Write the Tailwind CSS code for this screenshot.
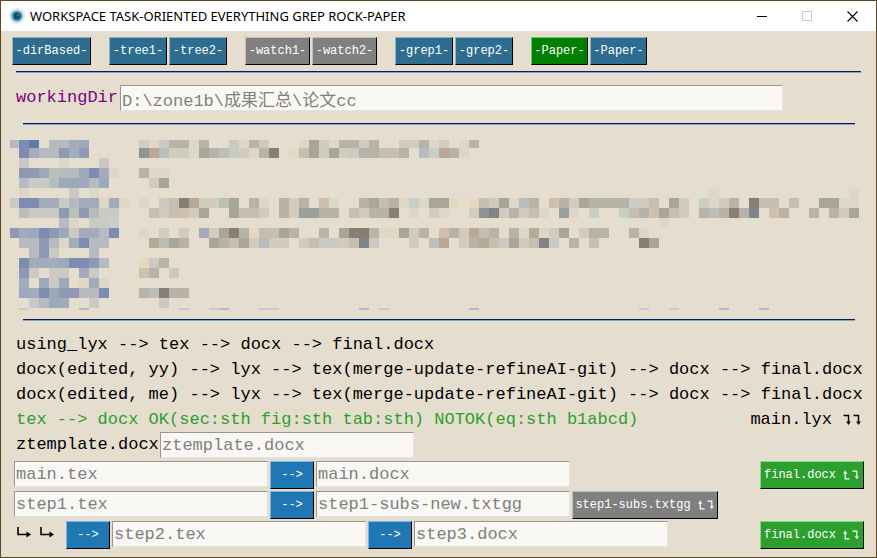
<!DOCTYPE html>
<html lang="en">
<head>
<meta charset="utf-8">
<meta name="viewport" content="width=device-width, initial-scale=1">
<title>WORKSPACE TASK-ORIENTED EVERYTHING GREP ROCK-PAPER</title>
<script src="https://cdn.jsdelivr.net/npm/@tailwindcss/browser@4"></script>
</head>
<body class="min-h-screen flex flex-col border border-[#5b4a24] bg-[#e5decf] overflow-x-hidden font-['Liberation_Mono','Noto_Sans_CJK_SC',monospace] text-black">
<svg class="hidden">
  <symbol id="down" viewBox="0 0 10 14"><path d="M1.5 2.5H6.5V9" fill="none" stroke="currentColor" stroke-width="1.4"/><path d="M4.2 8.5H8.8L6.5 12Z" fill="currentColor"/></symbol>
  <symbol id="up" viewBox="0 0 10 14"><path d="M3.5 4V11.5H8.5" fill="none" stroke="currentColor" stroke-width="1.4"/><path d="M1 5.5H6L3.5 1.8Z" fill="currentColor"/></symbol>
  <symbol id="right" viewBox="0 0 16 14"><path d="M2 1V8.5H11" fill="none" stroke="currentColor" stroke-width="1.6"/><path d="M10.5 5.5V11.5L15 8.5Z" fill="currentColor"/></symbol>
</svg>

<header class="flex h-[30px] items-center bg-white pl-2">
  <svg class="size-4 shrink-0" viewBox="0 0 16 16"><circle cx="8" cy="8" r="8" fill="#e3e5e6"/><circle cx="8" cy="8" r="5.6" fill="#35a8d5"/><circle cx="8" cy="8" r="3.5" fill="#2b4356"/><circle cx="9.2" cy="7" r="1" fill="#5d7584"/></svg>
  <h1 class="ml-[5px] grow whitespace-nowrap font-['Noto_Sans',sans-serif] text-[13px] leading-4">WORKSPACE TASK-ORIENTED EVERYTHING GREP ROCK-PAPER</h1>
  <button aria-label="Minimize" class="flex h-full w-[45px] items-center justify-center"><svg class="size-[10px]" viewBox="0 0 10 10"><path d="M0 5.5H10" stroke="#000"/></svg></button>
  <button aria-label="Maximize" disabled class="flex h-full w-[45px] items-center justify-center"><svg class="size-[10px]" viewBox="0 0 10 10"><rect x=".5" y=".5" width="9" height="9" fill="none" stroke="#ccc"/></svg></button>
  <button aria-label="Close" class="flex h-full w-[47px] items-center justify-center"><svg class="size-[11px]" viewBox="0 0 11 11"><path d="M.5 .5L10.5 10.5M10.5 .5L.5 10.5" stroke="#000" stroke-width="1.1"/></svg></button>
</header>

<main class="flex flex-col">
  <nav class="flex gap-[18px] pt-[6px] pl-[11px] text-[12px] text-white">
    <div class="flex gap-[2px]">
      <button class="h-7 w-[79px] border border-t-[#8fb3c6] border-l-[#8fb3c6] border-r-black border-b-black bg-[#2e6d8f]">-dirBased-</button>
    </div>
    <div class="flex gap-[2px]">
      <button class="h-7 w-[58px] border border-t-[#8fb3c6] border-l-[#8fb3c6] border-r-black border-b-black bg-[#2e6d8f]">-tree1-</button>
      <button class="h-7 w-[58px] border border-t-[#8fb3c6] border-l-[#8fb3c6] border-r-black border-b-black bg-[#2e6d8f]">-tree2-</button>
    </div>
    <div class="flex gap-[2px]">
      <button class="h-7 w-[65px] border border-t-[#c0c0c0] border-l-[#c0c0c0] border-r-black border-b-black bg-[#808080]">-watch1-</button>
      <button class="h-7 w-[65px] border border-t-[#c0c0c0] border-l-[#c0c0c0] border-r-black border-b-black bg-[#808080]">-watch2-</button>
    </div>
    <div class="flex gap-[2px]">
      <button class="h-7 w-[58px] border border-t-[#8fb3c6] border-l-[#8fb3c6] border-r-black border-b-black bg-[#2e6d8f]">-grep1-</button>
      <button class="h-7 w-[58px] border border-t-[#8fb3c6] border-l-[#8fb3c6] border-r-black border-b-black bg-[#2e6d8f]">-grep2-</button>
    </div>
    <div class="flex gap-[2px]">
      <button class="h-7 w-[57px] border border-t-[#6fc06f] border-l-[#6fc06f] border-r-black border-b-black bg-[#008000]">-Paper-</button>
      <button class="h-7 w-[57px] border border-t-[#8fb3c6] border-l-[#8fb3c6] border-r-black border-b-black bg-[#2e6d8f]">-Paper-</button>
    </div>
  </nav>

  <hr class="mt-[6px] mr-[15px] ml-[15px] h-[2px] border-0 border-t border-t-[#00205c] bg-[#86a4cc]">

  <div class="mt-3 flex items-center pl-[15px] text-[17px]">
    <label for="dir" class="w-[104px] text-[#800080]">workingDir</label>
    <input id="dir" value="D:\zone1b\成果汇总\论文cc" class="mr-[93px] h-[26px] min-w-0 grow border border-t-[#999792] border-l-[#999792] border-r-[#e3e3e3] border-b-[#e3e3e3] bg-[#f9f8f4] pl-px text-[#808080] outline-none">
  </div>

  <hr class="mt-3 mr-[21px] ml-[22px] h-[2px] border-0 border-t border-t-[#00205c] bg-[#86a4cc]">

  <div class="mt-[15px] ml-[9px] h-[170px] overflow-hidden">
    <svg id="mosaic" class="block h-[170px] w-[850px]" viewBox="10 140 850 170" shape-rendering="crispEdges" aria-hidden="true"></svg>
  </div>

  <hr class="mt-[9px] mr-[21px] ml-[22px] h-[2px] border-0 border-t border-t-[#00205c] bg-[#86a4cc]">

  <div class="mt-[11px] pl-[15px] text-[17px] leading-[25px] whitespace-nowrap">
    <p>using_lyx --&gt; tex --&gt; docx --&gt; final.docx</p>
    <p>docx(edited, yy) --&gt; lyx --&gt; tex(merge-update-refineAI-git) --&gt; docx --&gt; final.docx</p>
    <p>docx(edited, me) --&gt; lyx --&gt; tex(merge-update-refineAI-git) --&gt; docx --&gt; final.docx</p>
    <div class="flex items-center justify-between pr-[14px]">
      <p class="text-[#2ca02c]">tex --&gt; docx OK(sec:sth fig:sth tab:sth) NOTOK(eq:sth b1abcd)</p>
      <p class="flex items-center">main.lyx<span class="ml-[10px] flex"><svg class="h-[14px] w-[10px]"><use href="#down"/></svg><svg class="h-[14px] w-[10px]"><use href="#down"/></svg></span></p>
    </div>
  </div>

  <div class="flex items-center pl-[15px] text-[17px]">
    <label for="tpl" class="w-[144px]">ztemplate.docx</label>
    <input id="tpl" value="ztemplate.docx" class="h-[26px] w-[254px] border border-t-[#999792] border-l-[#999792] border-r-[#e3e3e3] border-b-[#e3e3e3] bg-[#f9f8f4] pl-px text-[#808080] outline-none">
  </div>

  <div class="mt-[3px] flex flex-col gap-[2px] pr-[12px] pl-[13px] text-[17px]">
    <div class="flex items-start gap-[2px]">
      <input aria-label="Main source" value="main.tex" class="h-[26px] w-[254px] border border-t-[#999792] border-l-[#999792] border-r-[#e3e3e3] border-b-[#e3e3e3] bg-[#f9f8f4] pl-px text-[#808080] outline-none">
      <button class="h-7 w-[44px] border border-t-[#7fb2f0] border-l-[#7fb2f0] border-r-black border-b-black bg-[#1f77b4] text-[12px] text-white">--&gt;</button>
      <input aria-label="Main output" value="main.docx" class="h-[26px] w-[254px] border border-t-[#999792] border-l-[#999792] border-r-[#e3e3e3] border-b-[#e3e3e3] bg-[#f9f8f4] pl-px text-[#808080] outline-none">
      <button class="ml-auto flex h-7 w-[104px] items-center justify-center border border-t-[#85dc85] border-l-[#85dc85] border-r-black border-b-black bg-[#2ca02c] text-[12px] text-white">final.docx<svg class="ml-[6px] h-[12px] w-[9px]"><use href="#up"/></svg><svg class="h-[12px] w-[9px]"><use href="#down"/></svg></button>
    </div>
    <div class="flex items-start gap-[2px]">
      <input aria-label="Step 1 source" value="step1.tex" class="h-[26px] w-[254px] border border-t-[#999792] border-l-[#999792] border-r-[#e3e3e3] border-b-[#e3e3e3] bg-[#f9f8f4] pl-px text-[#808080] outline-none">
      <button class="h-7 w-[44px] border border-t-[#7fb2f0] border-l-[#7fb2f0] border-r-black border-b-black bg-[#1f77b4] text-[12px] text-white">--&gt;</button>
      <input aria-label="Step 1 output" value="step1-subs-new.txtgg" class="h-[26px] w-[254px] border border-t-[#999792] border-l-[#999792] border-r-[#e3e3e3] border-b-[#e3e3e3] bg-[#f9f8f4] pl-px text-[#808080] outline-none">
      <button class="flex h-7 w-[146px] items-center justify-center border border-t-[#c0c0c0] border-l-[#c0c0c0] border-r-black border-b-black bg-[#808080] text-[12px] text-white">step1-subs.txtgg<svg class="ml-[6px] h-[12px] w-[9px]"><use href="#up"/></svg><svg class="h-[12px] w-[9px]"><use href="#down"/></svg></button>
    </div>
    <div class="flex items-start gap-[2px]">
      <span class="flex w-[50px] gap-[7px] pt-[5px] pl-[2px]"><svg class="h-[14px] w-4"><use href="#right"/></svg><svg class="h-[14px] w-4"><use href="#right"/></svg></span>
      <button class="h-7 w-[44px] border border-t-[#7fb2f0] border-l-[#7fb2f0] border-r-black border-b-black bg-[#1f77b4] text-[12px] text-white">--&gt;</button>
      <input aria-label="Step 2 source" value="step2.tex" class="h-[26px] w-[254px] border border-t-[#999792] border-l-[#999792] border-r-[#e3e3e3] border-b-[#e3e3e3] bg-[#f9f8f4] pl-px text-[#808080] outline-none">
      <button class="h-7 w-[44px] border border-t-[#7fb2f0] border-l-[#7fb2f0] border-r-black border-b-black bg-[#1f77b4] text-[12px] text-white">--&gt;</button>
      <input aria-label="Step 3 output" value="step3.docx" class="h-[26px] w-[254px] border border-t-[#999792] border-l-[#999792] border-r-[#e3e3e3] border-b-[#e3e3e3] bg-[#f9f8f4] pl-px text-[#808080] outline-none">
      <button class="ml-auto flex h-7 w-[104px] items-center justify-center border border-t-[#85dc85] border-l-[#85dc85] border-r-black border-b-black bg-[#2ca02c] text-[12px] text-white">final.docx<svg class="ml-[6px] h-[12px] w-[9px]"><use href="#up"/></svg><svg class="h-[12px] w-[9px]"><use href="#down"/></svg></button>
    </div>
  </div>
</main>

<script>
// Pixelated (redacted) text block: each row lists "column:cells", one letter per 10px cell.
const shades = {
  A:'#5f7ba9',B:'#7d8cb0',C:'#9099b4',D:'#a4abba',E:'#b7babf',F:'#cac9c4',H:'#9ba9bb',
  a:'#857f78',b:'#a8a599',c:'#b8b3a8',d:'#c6bfb1',e:'#d2ccbe',f:'#ddd7c8',g:'#8b7e70',
  h:'#b8a894',i:'#d0bfad',j:'#e5d8be',k:'#b9c0b9',l:'#c9cec6',m:'#8b9595',n:'#808488',o:'#9aa09b'
};
const rows = [
  '0:EBA.EEDH 13:efFccfc..FfcF 29:fbefccec..elcfe.fc',
  '1:BDEECDC 13:mhkeefbckFefcg.jdbebeFccddc.Elhcf',
  '1:F...f...F',
  '1:CCHkEEHBDf 13:cff',
  '1:EFFEHHHEH 14:eb',
  '1:f....F.f 70:f 84:f',
  '0:FBBDDFEDDfDf 13:f.Fdaheekb.cf.cec.if..cbdcflfbbj.jdFbfkc.icebccccled.be.lfec.gdd.d..bbff',
  '1:kFFFCkCEFF 13:.dedieb..bdde.ceoocc.deccg.f.ef..emnecedf.of.l..ldcibde.ckcgcn.ic..c.ceb',
  '5:Ef.FFl 65:f',
  '0:CDHBCHFDDEB 13:f.e.e.Debgcjddbc..c.bagcfjbec.icehdc.cfhfeb.ecc..cf',
  '1:EECEfDBEE 14:hkbc 20:bcdbeEee.edFFednF...e.kh.echdFbednF.c.d 63:ab',
  '2:ECF...E',
  '1:BDDDHBBCE 13:jFc',
  '1:CF.FF.DF 13:ic.F',
  '1:D.HFH.fDf',
  '1:HDBHCCEEB 13:ckacc',
  '2:FEHD..F 15:F',
  '1:F 7:E 17:F 20:FE 25:FF 35:E 37:F 46:E 63:F 66:F 71:E 75:E'
];
const svg = document.getElementById('mosaic');
rows.forEach((row, r) => {
  const y = r === 0 ? 140 : 138 + r * 10;
  const height = r === 0 ? 8 : r === rows.length - 1 ? 2 : 10;
  row.split(' ').forEach(run => {
    const [start, cells] = run.split(':');
    [...cells].forEach((cell, i) => {
      if (cell === '.') return;
      const rect = document.createElementNS('http://www.w3.org/2000/svg', 'rect');
      rect.setAttribute('x', 9 + (Number(start) + i) * 10);
      rect.setAttribute('y', y);
      rect.setAttribute('width', 10);
      rect.setAttribute('height', height);
      rect.setAttribute('fill', shades[cell]);
      svg.append(rect);
    });
  });
});
</script>
</body>
</html>
